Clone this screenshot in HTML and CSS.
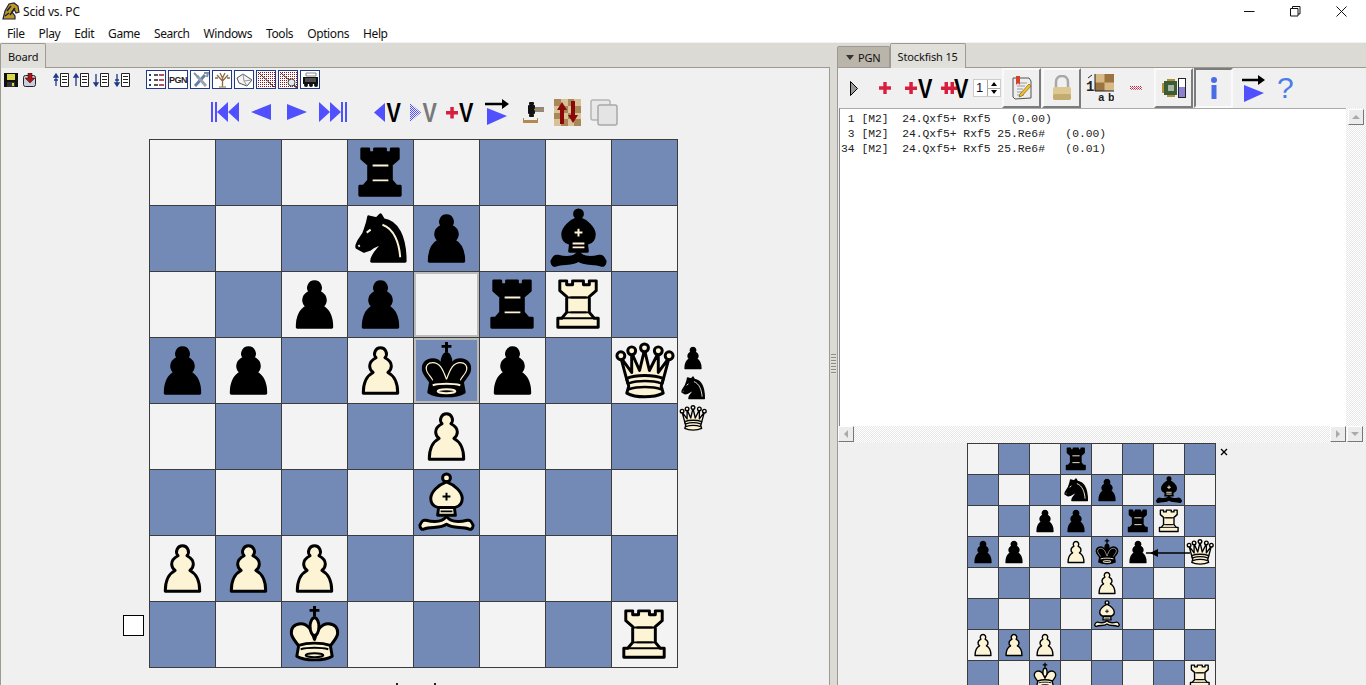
FILE: index.html
```html
<!DOCTYPE html>
<html lang="en">
<head>
    <meta charset="UTF-8">
    <title>Scid vs. PC</title>
    <link rel="stylesheet" href="styles.css">
</head>
<body>
    <!-- piece shapes and patterns, used by both boards -->
    <svg class="defs">
        <defs>
            <pattern id="chkBlue" width="2" height="2" patternUnits="userSpaceOnUse"><rect width="1" height="1" fill="#5050ff"/><rect x="1" y="1" width="1" height="1" fill="#5050ff"/></pattern>
            <pattern id="chkBlack" width="2" height="2" patternUnits="userSpaceOnUse" patternTransform="scale(1.250 1)"><rect width="1" height="1" fill="#000"/><rect x="1" y="1" width="1" height="1" fill="#000"/></pattern>
            <pattern id="chkRed" width="2" height="2" patternUnits="userSpaceOnUse"><rect width="2" height="2" fill="#fff"/><rect width="1" height="1" fill="#d01838"/><rect x="1" y="1" width="1" height="1" fill="#e06078"/></pattern>
            <pattern id="dotRed" width="2" height="2" patternUnits="userSpaceOnUse"><rect width="2" height="2" fill="#fff"/><rect width="1" height="1" fill="#981010"/></pattern>
        </defs>
        <symbol id="P" viewBox="0 0 66 66">
            <path class="pc" d="M33 10a6 6 0 0 1 4.500 10c4 2 6.500 5 6.500 8.500c0 3-1.500 5-3.500 6.500c6 3 10 10 10 21H15.500c0-11 4-18 10-21c-2-1.500-3.500-3.500-3.500-6.500c0-3.500 2.500-6.500 6.500-8.500a6 6 0 0 1 4.500-10z"/>
        </symbol>
        <symbol id="R" viewBox="0 0 66 66">
            <path class="pc" d="M14 9H21V13H27V9H38V13H44V9H51V19L44 25V41L49 47H53V56H12V47H16L21 41V25L14 19Z"/>
            <path class="ln" d="M21 26H44M21 41H44M16 47H49"/>
            <path class="dt" d="M25 26H41M25 41H41"/>
        </symbol>
        <symbol id="N" viewBox="0 0 66 66">
            <path class="pc" d="M21 11L29 13L33 9L36 14C50 16 58 31 58 56H24C24 48 34 42 38 34C33 40 27 39 22 44L16 46L9 42C8 38 12 34 16 28C18 22 20 18 21 11Z"/>
            <path class="dt" d="M35 19C47 23 52 38 53 52"/>
            <path class="dt" d="M19 27L23 24M10.500 41L12 40"/>
        </symbol>
        <symbol id="B" viewBox="0 0 66 66">
            <circle class="pc" cx="33" cy="8" r="4"/>
            <path class="pc" d="M33 12C25 15 17 22 17 29C17 34 20 37 24 38H42C46 37 49 34 49 29C49 22 41 15 33 12Z"/>
            <path class="pc" d="M25 38H41L42 46H24Z"/>
            <path class="pc" d="M33 47C29 53 20 53 12 51C9 50.500 8 52 6 56C6 59 8 61 10 60C17 57 27 60 33 55C39 60 49 57 56 60C58 61 60 59 60 56C58 52 57 50.500 54 51C46 53 37 53 33 47Z"/>
            <path class="dt" d="M33 23V31M29 27H37M27 38H39M27 42H39"/>
        </symbol>
        <symbol id="K" viewBox="0 0 66 66">
            <path class="ln thick" d="M33 4V15M28 8.500H38"/>
            <path class="pc" d="M33 38C30 29 27 22 19 22C12 22 9 27 9.500 32C10 37 15 41 17 45H49C51 41 56 37 56.500 32C57 27 54 22 47 22C39 22 36 29 33 38Z"/>
            <ellipse class="pc" cx="33" cy="25" rx="4.500" ry="9"/>
            <path class="pc" d="M17 44C26 41 40 41 49 44L51 55C43 60 23 60 15 55Z"/>
            <path class="bo" d="M33 42C29 31 26 25 19 25C14 25 12 28 12.500 32C13 36 18 40 19 43M33 42C37 31 40 25 47 25C52 25 54 28 53.500 32C53 36 48 40 47 43"/>
            <path class="dt" d="M19 48C26 46 40 46 47 48"/>
            <ellipse class="dt" cx="33" cy="54" rx="9" ry="2"/>
        </symbol>
        <symbol id="Q" viewBox="0 0 66 66">
            <path class="pc" d="M16 46L9 20L20 35L20 15L28 33L33 12L38 33L47 15L47 35L58 20L51 46Z"/>
            <circle class="pc" cx="9" cy="18" r="4"/><circle class="pc" cx="20" cy="13" r="4"/><circle class="pc" cx="33" cy="10" r="4"/><circle class="pc" cx="47" cy="13" r="4"/><circle class="pc" cx="58" cy="18" r="4"/>
            <path class="pc" d="M15 41C24 37 42 37 52 41L50 49L52 56C42 61 24 61 15 56L17 49Z"/>
            <path class="dt thick" d="M17 46C26 43 41 43 50 46M17 52C26 49 41 49 50 52"/>
        </symbol>
        <symbol id="pageLines" viewBox="0 0 16 14">
            <path d="M7.500 .5H15.500V13.500H7.500Z" fill="#fff" stroke="#222"/>
            <path d="M9 3.500H14M9 6.500H14M9 9.500H14" stroke="#222"/>
        </symbol>
    </svg>

    <header class="titlebar">
        <svg class="logo" width="18" height="18" viewBox="0 0 18 18">
            <path d="M1 17L3 9L7 2L12 1L16 4L17 10L14 11L12 7L10 10L13 14L13 17Z" fill="#c09a20" stroke="#1c2340" stroke-width="1.200"/>
            <path d="M5 9L9 4M8 13L13 6M3 14L7 11" stroke="#1c2340" stroke-width="1.500" fill="none"/>
        </svg>
        <span class="apptitle">Scid vs. PC</span>
        <div class="winctl">
            <span><svg width="11" height="11" viewBox="0 0 11 11"><path d="M0 5.500H10.500" stroke="#111"/></svg></span>
            <span><svg width="11" height="11" viewBox="0 0 11 11"><path d="M.5 2.500H8V10H.5ZM2.500 2.500V.5H10V8H8" fill="none" stroke="#111"/></svg></span>
            <span><svg width="11" height="11" viewBox="0 0 11 11"><path d="M.5 .5L10.500 10.500M10.500 .5L.5 10.500" stroke="#111"/></svg></span>
        </div>
    </header>

    <nav class="menubar">
        <a>File</a><a>Play</a><a>Edit</a><a>Game</a><a>Search</a><a>Windows</a><a>Tools</a><a>Options</a><a>Help</a>
    </nav>

    <main class="panes">
        <section class="left">
            <div class="tabs">
                <div class="tab sel">Board</div>
            </div>
            <div class="pane">
                <div class="tb-game">
                    <svg class="i-save" width="14" height="14" viewBox="0 0 14 14"><rect width="14" height="14" fill="#111"/><rect x="3" y="1" width="8" height="6" fill="#d8d848"/><rect x="3" y="9" width="8" height="5" fill="#333"/><rect x="8" y="10" width="2" height="3" fill="#d8d848"/></svg>
                    <svg class="i-load" width="14" height="14" viewBox="0 0 14 14"><rect x=".5" y="2.500" width="12" height="11" rx="2" fill="#c8d0e0" stroke="#222"/><path d="M5 0H9V5H12L7 10L2 5H5Z" fill="#a01818" stroke="#400" stroke-width=".5"/></svg>
                    <svg class="i-line1" width="16" height="14" viewBox="0 0 16 14"><use href="#pageLines"/><path d="M3 4V13M1 4L3 1L5 4ZM1 7H5" stroke="#1c3a8c" stroke-width="1.300" fill="#1c3a8c"/></svg>
                    <svg class="i-line2" width="16" height="14" viewBox="0 0 16 14"><use href="#pageLines"/><path d="M3 4V13M1 4L3 1L5 4Z" stroke="#1c3a8c" stroke-width="1.300" fill="#1c3a8c"/></svg>
                    <svg class="i-line2" width="16" height="14" viewBox="0 0 16 14"><use href="#pageLines"/><path d="M3 1V10M1 10L3 13L5 10Z" stroke="#1c3a8c" stroke-width="1.300" fill="#1c3a8c"/></svg>
                    <svg class="i-line4" width="16" height="14" viewBox="0 0 16 14"><use href="#pageLines"/><path d="M3 1V10M1 10L3 13L5 10ZM1 7H5" stroke="#1c3a8c" stroke-width="1.300" fill="#1c3a8c"/></svg>

                    <div class="winbtns">
                        <div class="wbtn"><svg width="17" height="16" viewBox="0 0 17 16"><path d="M1 3H3M1 8H3M1 13H3" stroke="#1c3a8c" stroke-width="2"/><path d="M6 3H10M6 8H10M6 13H10" stroke="#222" stroke-width="1.500"/><path d="M11 3H16M11 8H16M11 13H16" stroke="#9c1c2c" stroke-width="1.500"/></svg></div>
                        <div class="wbtn pgn">PGN</div>
                        <div class="wbtn"><svg width="17" height="16" viewBox="0 0 17 16"><path d="M3 14L13 3" stroke="#6080a8" stroke-width="3"/><path d="M14 14L5 4" stroke="#9aa4b0" stroke-width="3"/><path d="M2 1L6 5M12 1L16 1L15 5" stroke="#8090a8" stroke-width="2" fill="none"/></svg></div>
                        <div class="wbtn"><svg width="17" height="16" viewBox="0 0 17 16"><path d="M8.500 15V5M8.500 9L3 3M8.500 9L14 3M8.500 6L6 1M8.500 6L11 1M4 6L1 6M13 6L16 6" stroke="#8a6a48" stroke-width="1.300" fill="none"/><path d="M5 15H12" stroke="#b09a7a" stroke-width="1.500"/></svg></div>
                        <div class="wbtn"><svg width="17" height="16" viewBox="0 0 17 16"><path d="M1 6L7 2L16 8L11 14L3 11Z" fill="#f4f4f4" stroke="#555"/><path d="M7 2L8 9L11 14M8 9L16 8" stroke="#999" fill="none"/></svg></div>
                        <div class="wbtn"><svg width="17" height="16" viewBox="0 0 17 16"><rect width="17" height="16" fill="url(#dotRed)"/><path d="M1 1L16 15" stroke="#333"/></svg></div>
                        <div class="wbtn"><svg width="17" height="16" viewBox="0 0 17 16"><rect width="17" height="16" fill="url(#dotRed)"/><path d="M1 1L10 9" stroke="#333"/><circle cx="11.500" cy="10.500" r="3.500" fill="#e0e8f0" stroke="#444"/><path d="M14 13L17 16" stroke="#444" stroke-width="1.500"/></svg></div>
                        <div class="wbtn"><svg width="17" height="16" viewBox="0 0 17 16"><path d="M4 1H14V4H4Z" fill="#fff" stroke="#888"/><path d="M1 5H16V12H1Z" fill="#111"/><path d="M3 7H14M3 9H14" stroke="#888"/><circle cx="4" cy="13" r="2" fill="#111"/><circle cx="9" cy="13" r="2" fill="#111"/><circle cx="14" cy="13" r="2" fill="#111"/></svg></div>
                    </div>
                </div>

                <div class="tb-nav">
                    <svg class="n-first" width="28" height="20" viewBox="0 0 28 20"><path d="M0 0H2V20H0ZM4 0H6V20H4ZM6 10L17 0V20ZM17 10L28 0V20Z" fill="#5050ff"/></svg>
                    <svg class="n-prev" width="20" height="20" viewBox="0 0 20 20"><path d="M0 10L20 2V18Z" fill="#5050ff"/></svg>
                    <svg class="n-next" width="20" height="20" viewBox="0 0 20 20"><path d="M20 10L0 2V18Z" fill="#5050ff"/></svg>
                    <svg class="n-last" width="28" height="20" viewBox="0 0 28 20"><path d="M28 0H26V20H28ZM24 0H22V20H24ZM22 10L11 0V20ZM11 10L0 0V20Z" fill="#5050ff"/></svg>
                    <svg class="n-vprev" width="28" height="32" viewBox="0 0 28 32"><path d="M0 16.500L11 7V26Z" fill="#5050ff"/><text class="vtxt" transform="translate(12.500 26) scale(.8 1)">V</text></svg>
                    <svg class="n-vnext" width="28" height="32" viewBox="0 0 28 32"><path d="M11 16.500L0 7V26Z" fill="url(#chkBlue)"/><text class="vtxt" transform="translate(12.500 26) scale(.8 1)" fill="url(#chkBlack)">V</text></svg>
                    <svg class="n-vadd" width="28" height="32" viewBox="0 0 28 32"><path d="M0 15H12V18.500H0ZM4.300 11H7.800V22.500H4.300Z" fill="#d81e3e"/><text class="vtxt" transform="translate(13 26) scale(.8 1)">V</text></svg>
                    <svg class="n-trial" width="24" height="26" viewBox="0 0 24 26"><path d="M0 5H20" stroke="#000" stroke-width="2.500"/><path d="M17 0L24 5L17 10Z"/><path d="M2 9L22 17L2 26Z" fill="#5050ff"/></svg>
                    <svg class="n-hammer" width="21" height="22" viewBox="0 0 21 22"><rect x="6" y="1" width="5" height="3" rx="1" fill="#111"/><rect x="5" y="4" width="7" height="9" rx="1" fill="#111"/><rect x="6" y="13" width="5" height="3" rx="1" fill="#111"/><path d="M11 7H21M11 10H21" stroke="#222" stroke-width="1.200"/><path d="M11 8.500H21" stroke="#b08a50" stroke-width="1.500"/><path d="M0 17H1V19H14V17H15V22H0Z" fill="#b08a50"/></svg>
                    <svg class="n-flip" width="27" height="27" viewBox="0 0 27 27"><rect width="27" height="27" fill="#d8c098"/><path d="M0 0H7V7H0ZM14 0H20V7H14ZM7 7H14V14H7ZM20 7H27V14H20ZM0 14H7V20H0ZM14 14H20V20H14ZM7 20H14V27H7ZM20 20H27V27H20Z" fill="#a88858"/><path d="M8 3L13 11H10V25H6V11H3Z" fill="#8c0808"/><path d="M19 24L14 16H17V2H21V16H24Z" fill="#8c0808"/></svg>
                    <svg class="n-copy" width="28" height="27" viewBox="0 0 28 27"><rect x="1" y="1" width="19" height="20" rx="2" fill="#e8e8e8" stroke="#b4b4b4" stroke-width="1.500"/><rect x="8" y="6" width="19" height="20" rx="2" fill="#e4e4e4" stroke="#a8a8a8" stroke-width="1.500"/></svg>
                </div>

                <div class="boardrow">
                    <div class="tomove"></div>
                    <div class="board">
                        <div class="sq l"></div><div class="sq d"></div><div class="sq l"></div><div class="sq d"><svg class="b"><use href="#R"/></svg></div><div class="sq l"></div><div class="sq d"></div><div class="sq l"></div><div class="sq d"></div>
                        <div class="sq d"></div><div class="sq l"></div><div class="sq d"></div><div class="sq l"><svg class="b"><use href="#N"/></svg></div><div class="sq d"><svg class="b"><use href="#P"/></svg></div><div class="sq l"></div><div class="sq d"><svg class="b"><use href="#B"/></svg></div><div class="sq l"></div>
                        <div class="sq l"></div><div class="sq d"></div><div class="sq l"><svg class="b"><use href="#P"/></svg></div><div class="sq d"><svg class="b"><use href="#P"/></svg></div><div class="sq l last"></div><div class="sq d"><svg class="b"><use href="#R"/></svg></div><div class="sq l"><svg class="w"><use href="#R"/></svg></div><div class="sq d"></div>
                        <div class="sq d"><svg class="b"><use href="#P"/></svg></div><div class="sq l"><svg class="b"><use href="#P"/></svg></div><div class="sq d"></div><div class="sq l"><svg class="w"><use href="#P"/></svg></div><div class="sq d last"><svg class="b"><use href="#K"/></svg></div><div class="sq l"><svg class="b"><use href="#P"/></svg></div><div class="sq d"></div><div class="sq l"><svg class="w"><use href="#Q"/></svg></div>
                        <div class="sq l"></div><div class="sq d"></div><div class="sq l"></div><div class="sq d"></div><div class="sq l"><svg class="w"><use href="#P"/></svg></div><div class="sq d"></div><div class="sq l"></div><div class="sq d"></div>
                        <div class="sq d"></div><div class="sq l"></div><div class="sq d"></div><div class="sq l"></div><div class="sq d"><svg class="w"><use href="#B"/></svg></div><div class="sq l"></div><div class="sq d"></div><div class="sq l"></div>
                        <div class="sq l"><svg class="w"><use href="#P"/></svg></div><div class="sq d"><svg class="w"><use href="#P"/></svg></div><div class="sq l"><svg class="w"><use href="#P"/></svg></div><div class="sq d"></div><div class="sq l"></div><div class="sq d"></div><div class="sq l"></div><div class="sq d"></div>
                        <div class="sq d"></div><div class="sq l"></div><div class="sq d"><svg class="w"><use href="#K"/></svg></div><div class="sq l"></div><div class="sq d"></div><div class="sq l"></div><div class="sq d"></div><div class="sq l"><svg class="w"><use href="#R"/></svg></div>
                    </div>
                    <div class="material">
                        <svg class="b"><use href="#P"/></svg>
                        <svg class="b"><use href="#N"/></svg>
                        <svg class="w"><use href="#Q"/></svg>
                    </div>
                </div>
                <div class="infotips"><span></span><span></span></div>
            </div>
        </section>

        <div class="sash"><div class="grip"></div></div>

        <section class="right">
            <div class="tabs">
                <div class="tab off"><span class="caret"></span>PGN</div>
                <div class="tab sel">Stockfish 15</div>
            </div>
            <div class="pane enginepane">
                <div class="tb-engine">
                    <svg class="e-play" width="8" height="15" viewBox="0 0 8 15"><path d="M.5 .5L7.500 7.500L.5 14.500Z" fill="#999" stroke="#000"/></svg>
                    <svg class="e-plus" width="12" height="12" viewBox="0 0 12 12"><path d="M0 4.300H12V7.700H0ZM4.300 0H7.700V12H4.300Z" fill="#d81e3e"/></svg>
                    <svg class="e-addv" width="28" height="32" viewBox="0 0 28 32"><path d="M0 14.500H12V18H0ZM4.300 10H7.800V22H4.300Z" fill="#d81e3e"/><text class="vtxt" transform="translate(13 26) scale(.8 1)">V</text></svg>
                    <svg class="e-addall" width="28" height="32" viewBox="0 0 28 32"><path d="M0 14.500H16V18H0ZM3.500 10H7V22H3.500ZM9.500 10H13V22H9.500Z" fill="#d81e3e"/><text class="vtxt" transform="translate(13 26) scale(.8 1)">V</text></svg>
                    <div class="spin"><span class="spinval">1</span><span class="spinbtns"><i class="up"></i><i class="down"></i></span></div>
                    <div class="rbtn"><svg width="20" height="24" viewBox="0 0 20 24"><path d="M1 2H17L19 5V22L3 23L1 21Z" fill="#eee" stroke="#555"/><path d="M5 7H15M5 10H13M5 13H11M5 16H10M5 19H12" stroke="#999"/><path d="M4 0H8V9L6 7L4 9Z" fill="#d8402c"/><path d="M8 18L17 8L19 10L10 20L7 21Z" fill="#f0c030" stroke="#705010" stroke-width=".6"/></svg></div>
                    <div class="rbtn"><svg width="20" height="26" viewBox="0 0 20 26"><path d="M4 13V7C4 3 7 1 10 1S16 3 16 7V13" fill="none" stroke="#a8a8a8" stroke-width="2.500"/><rect x="1" y="12" width="18" height="13" rx="2" fill="#dcc890"/><rect x="1" y="19" width="18" height="6" rx="2" fill="#c4ac70"/></svg></div>
                    <svg class="e-coord" width="28" height="30" viewBox="0 0 28 30"><text class="ctxt" x="0" y="18">1</text><path d="M2 5L6 2" stroke="#222"/><rect x="9" y="1" width="19" height="17" fill="#d8b884"/><path d="M9 9.500H18.500V18H9ZM18.500 1H28V9.500H18.500Z" fill="#9c7440"/><path d="M9 1V18H28" stroke="#222" fill="none"/><text class="ctxt small" x="12" y="28">a</text><text class="ctxt small" x="22" y="28">b</text></svg>
                    <svg class="e-dots" width="12" height="4" viewBox="0 0 12 4"><rect width="12" height="4" fill="url(#chkRed)"/></svg>
                    <div class="rbtn enginebtn"><svg width="24" height="20" viewBox="0 0 24 20"><rect x="2" y="3" width="13" height="14" fill="#3c5c38"/><rect x="0" y="5" width="2" height="10" fill="#b09030"/><rect x="5" y="1" width="8" height="2" fill="#b09030"/><rect x="5" y="17" width="8" height="2" fill="#b09030"/><rect x="6" y="7" width="6" height="6" fill="#a8b8a0"/><rect x="16.500" y=".5" width="7" height="19" fill="#fff" stroke="#222"/><rect x="17" y="9" width="6" height="10" fill="#8c80d0"/></svg></div>
                    <div class="rbtn sunk"><svg width="6" height="22" viewBox="0 0 6 22"><circle cx="3" cy="3" r="3" fill="#4a6ce8"/><rect x=".5" y="8" width="5" height="14" fill="#4a6ce8"/></svg></div>
                    <svg class="e-trial" width="23" height="27" viewBox="0 0 23 27"><path d="M0 5H19" stroke="#000" stroke-width="2.500"/><path d="M16 0L23 5L16 10Z"/><path d="M2 10L22 18L2 27Z" fill="#5050ff"/></svg>
                    <span class="e-help">?</span>
                </div>

                <div class="output">
                    <pre class="lines"> 1 [M2]  24.Qxf5+ Rxf5   (0.00)
 3 [M2]  24.Qxf5+ Rxf5 25.Re6#   (0.00)
34 [M2]  24.Qxf5+ Rxf5 25.Re6#   (0.01)</pre>
                    <div class="vscroll"><div class="sbtn"><i class="arr-up"></i></div></div>
                </div>
                <div class="hscroll">
                    <div class="sbtn"><i class="arr-left"></i></div>
                    <div class="sbtn push"><i class="arr-right"></i></div>
                    <div class="sbtn"><i class="arr-down"></i></div>
                </div>

                <div class="miniwrap">
                    <div class="board mini">
                        <div class="sq l"></div><div class="sq d"></div><div class="sq l"></div><div class="sq d"><svg class="b"><use href="#R"/></svg></div><div class="sq l"></div><div class="sq d"></div><div class="sq l"></div><div class="sq d"></div>
                        <div class="sq d"></div><div class="sq l"></div><div class="sq d"></div><div class="sq l"><svg class="b"><use href="#N"/></svg></div><div class="sq d"><svg class="b"><use href="#P"/></svg></div><div class="sq l"></div><div class="sq d"><svg class="b"><use href="#B"/></svg></div><div class="sq l"></div>
                        <div class="sq l"></div><div class="sq d"></div><div class="sq l"><svg class="b"><use href="#P"/></svg></div><div class="sq d"><svg class="b"><use href="#P"/></svg></div><div class="sq l"></div><div class="sq d"><svg class="b"><use href="#R"/></svg></div><div class="sq l"><svg class="w"><use href="#R"/></svg></div><div class="sq d"></div>
                        <div class="sq d"><svg class="b"><use href="#P"/></svg></div><div class="sq l"><svg class="b"><use href="#P"/></svg></div><div class="sq d"></div><div class="sq l"><svg class="w"><use href="#P"/></svg></div><div class="sq d"><svg class="b"><use href="#K"/></svg></div><div class="sq l"><svg class="b"><use href="#P"/></svg></div><div class="sq d"></div><div class="sq l"><svg class="w"><use href="#Q"/></svg></div>
                        <div class="sq l"></div><div class="sq d"></div><div class="sq l"></div><div class="sq d"></div><div class="sq l"><svg class="w"><use href="#P"/></svg></div><div class="sq d"></div><div class="sq l"></div><div class="sq d"></div>
                        <div class="sq d"></div><div class="sq l"></div><div class="sq d"></div><div class="sq l"></div><div class="sq d"><svg class="w"><use href="#B"/></svg></div><div class="sq l"></div><div class="sq d"></div><div class="sq l"></div>
                        <div class="sq l"><svg class="w"><use href="#P"/></svg></div><div class="sq d"><svg class="w"><use href="#P"/></svg></div><div class="sq l"><svg class="w"><use href="#P"/></svg></div><div class="sq d"></div><div class="sq l"></div><div class="sq d"></div><div class="sq l"></div><div class="sq d"></div>
                        <div class="sq d"></div><div class="sq l"></div><div class="sq d"><svg class="w"><use href="#K"/></svg></div><div class="sq l"></div><div class="sq d"></div><div class="sq l"></div><div class="sq d"></div><div class="sq l"><svg class="w"><use href="#R"/></svg></div>
                        <!-- best move arrow, h5 to f5 -->
                        <svg class="arrow" width="44" height="10" viewBox="0 0 44 10"><path d="M0 5H44" stroke="#000" stroke-width="1.500"/><path d="M4 5L12 1V9Z"/></svg>
                    </div>
                    <svg class="miniclose" width="8" height="8" viewBox="0 0 8 8"><path d="M1 1L7 7M7 1L1 7" stroke="#000" stroke-width="1.300"/></svg>
                </div>
            </div>
        </section>
    </main>
</body>
</html>
```

FILE: styles.css
```css
html, body { margin: 0; height: 100%; overflow: hidden; }
body { font-family: "Noto Sans", sans-serif; font-size: 12px; color: #111; background-color: #fff; display: flex; flex-direction: column; }
.defs { position: absolute; width: 0; height: 0; }

/* title and menu */
.titlebar { height: 22px; flex: none; display: flex; align-items: center; }
.logo { margin-left: 2px; }
.apptitle { margin-left: 3px; letter-spacing: -.2px; }
.winctl { margin-left: auto; display: flex; padding-right: 2px; }
.winctl span { width: 46px; display: flex; justify-content: center; }
.menubar { height: 20px; box-sizing: border-box; padding-top: 2px; flex: none; display: flex; align-items: center; letter-spacing: -.4px; }
.menubar a { padding: 0 7px; }

/* panes */
.panes { flex: 1; min-height: 0; display: flex; background-color: #dcdad5; border-top: 1px solid #f2f2f2; }
.left { width: 830px; flex: none; display: flex; flex-direction: column; }
.right { flex: 1; min-width: 0; display: flex; flex-direction: column; }
.sash { width: 7px; flex: none; display: flex; justify-content: center; align-items: center; }
.grip { width: 5px; height: 20px; background: repeating-linear-gradient(#8d8a84 0 1px, #e4e2de 1px 2px, #dcdad5 2px 3px); }

.tabs { height: 25px; box-sizing: border-box; flex: none; display: flex; align-items: flex-end; border-bottom: 1px solid #9e9a91; }
.tab { display: flex; align-items: center; justify-content: center; border: 1px solid #9e9a91; border-bottom: none; border-radius: 2px 2px 0 0; position: relative; top: 1px; box-sizing: border-box; font-size: 11px; letter-spacing: -.15px; }
.tab.sel { height: 25px; background-color: #e0dfda; padding: 0 7px; }
.tab.off { height: 21px; background-color: #bab5ab; padding: 0 8px; top: 0; }
.caret { width: 0; height: 0; border: 4px solid transparent; border-top: 5px solid #333; border-bottom: none; margin-right: 4px; }
.pane { flex: 1; min-height: 0; background-color: #f0f0f0; border-left: 1px solid #9e9a91; border-right: 1px solid #9e9a91; overflow: hidden; }
.enginepane { border-right: none; display: flex; flex-direction: column; }

/* main board toolbars */
.tb-game { display: flex; align-items: center; height: 19px; margin: 2px 0 0 3px; }
.i-load { margin-left: 5px; }
.i-line1 { margin-left: 16px; }
.i-line2 { margin-left: 4px; }
.i-line4 { margin-left: 5px; }
.winbtns { display: flex; gap: 2px; margin-left: 16px; }
.wbtn { width: 20px; height: 19px; box-sizing: border-box; background-color: #fff; border: 1.500px solid #1f3a88; display: flex; align-items: center; justify-content: center; }
.pgn { font: bold 9px "Liberation Sans", sans-serif; letter-spacing: -.5px; color: #222; }

.tb-nav { display: flex; align-items: center; height: 28px; margin: 9px 0 0 210px; }
.n-prev { margin-left: 12px; }
.n-next { margin-left: 16px; }
.n-last { margin-left: 12px; }
.n-vprev { margin-left: 27px; }
.n-vnext { margin-left: 8px; }
.n-vadd { margin-left: 8px; }
.n-trial { margin-left: 11px; }
.n-hammer { margin-left: 14px; }
.n-flip { margin-left: 10px; }
.n-copy { margin-left: 9px; }
.vtxt { font: bold 27px "Liberation Sans", sans-serif; }
.ctxt { font: bold 14px "Liberation Mono", monospace; fill: #222; }
.ctxt.small { font-size: 11px; }

/* boards */
.boardrow { display: grid; grid-template-columns: 148px 529px 30px; margin-top: 13px; }
.board { display: grid; grid-template-columns: repeat(8, 65px); grid-auto-rows: 65px; gap: 1px; padding: 1px; background-color: #3c3c3c; width: max-content; }
.board.mini { grid-template-columns: repeat(8, 30px); grid-auto-rows: 30px; position: relative; }
.sq { overflow: hidden; }
.sq svg, .material svg { display: block; width: 100%; height: 100%; }
.sq.l { background-color: #f3f3f3; }
.sq.d { background-color: #7389b6; }
.sq.last { box-shadow: inset 0 0 0 2px #bcbcbc; }
.tomove { width: 21px; height: 21px; box-sizing: border-box; background-color: #fff; border: 1px solid #000; align-self: end; justify-self: start; margin: 0 0 32px 122px; }
.material { margin-top: 204px; display: flex; flex-direction: column; }
.material svg { width: 30px; height: 30px; }
.infotips { display: flex; gap: 36px; margin: 15px 0 0 395px; }
.infotips span { width: 2px; height: 2px; background-color: #222; }

.w { --f: #fdf4d6; --l: #000; --bo: none; }
.b { --f: #000; --l: #fdf4d6; --bo: #fdf4d6; }
.pc { fill: var(--f); stroke: #000; stroke-width: 3; stroke-linejoin: round; }
.ln { fill: none; stroke: #000; stroke-width: 2; }
.ln.thick { stroke-width: 3; }
.dt { fill: none; stroke: var(--l); stroke-width: 2; }
.dt.thick { stroke-width: 2.500; }
.bo { fill: none; stroke: var(--bo); stroke-width: 1.200; }

/* engine window */
.tb-engine { height: 40px; flex: none; display: flex; align-items: center; }
.e-play { margin-left: 12px; }
.e-plus { margin-left: 21px; }
.e-addv { margin-left: 14px; }
.e-addall { margin-left: 8px; }
.spin { width: 28px; height: 18px; margin-left: 4px; box-sizing: border-box; border: 1px solid #ccc; background-color: #fff; display: flex; font: 13px "Liberation Sans", sans-serif; }
.spinval { flex: 1; padding-left: 2px; color: #113; line-height: 16px; }
.spinbtns { width: 12px; border-left: 1px solid #aaa; display: flex; flex-direction: column; }
.spinbtns i { flex: 1; display: flex; align-items: center; justify-content: center; }
.spinbtns i::before { content: ""; border: 3px solid transparent; }
.spinbtns .up::before { border-bottom: 4px solid #000; border-top: none; }
.spinbtns .down { border-top: 1px solid #aaa; }
.spinbtns .down::before { border-top: 4px solid #000; border-bottom: none; }
.rbtn { width: 39px; height: 40px; margin-left: 1px; box-sizing: border-box; display: flex; align-items: center; justify-content: center; border: 2px solid; border-color: #fafafa #7c7c7c #7c7c7c #fafafa; }
.rbtn.sunk { border-color: #7c7c7c #fafafa #fafafa #7c7c7c; }
.enginebtn { margin-left: 12px; }
.e-coord { margin-left: 5px; }
.e-dots { margin-left: 16px; }
.e-trial { margin-left: 9px; }
.e-help { margin-left: 12px; width: 16px; font: 30px/30px "Liberation Sans", sans-serif; color: #4a7ce8; }

.output { flex: none; height: 318px; display: flex; }
.lines { flex: 1; margin: 0 0 0 1px; padding: 3px 0 0 1px; box-sizing: border-box; background-color: #fff; border-left: 1px solid #888; border-top: 1px solid #aaa; font: 11.330px/15px "Liberation Mono", monospace; color: #222; }
.vscroll { width: 20px; box-sizing: border-box; padding: 1px 3px 0 2px; background: repeating-conic-gradient(#e8e8e8 0 25%, #fff 0 50%) 0 0 / 2px 2px; }
.hscroll { height: 17px; flex: none; display: flex; padding: 0 3px 0 0; background: repeating-conic-gradient(#e8e8e8 0 25%, #fff 0 50%) 0 0 / 2px 2px; }
.sbtn { width: 16px; height: 16px; box-sizing: border-box; display: flex; align-items: center; justify-content: center; background-color: #ececec; border: 1px solid; border-color: #fff #777 #777 #fff; }
.sbtn i { width: 0; height: 0; border: 4px solid transparent; }
.sbtn.push { margin-left: auto; margin-right: 1px; }
.arr-up { border-bottom-color: #aaa !important; border-top: none !important; }
.arr-down { border-top-color: #aaa !important; border-bottom: none !important; }
.arr-left { border-right-color: #aaa !important; border-left: none !important; }
.arr-right { border-left-color: #aaa !important; border-right: none !important; }

.miniwrap { flex: 1; min-height: 0; display: flex; align-items: flex-start; padding-left: 129px; }
.miniclose { margin: 5px 0 0 4px; flex: none; }
.arrow { position: absolute; left: 179px; top: 105px; }
```
